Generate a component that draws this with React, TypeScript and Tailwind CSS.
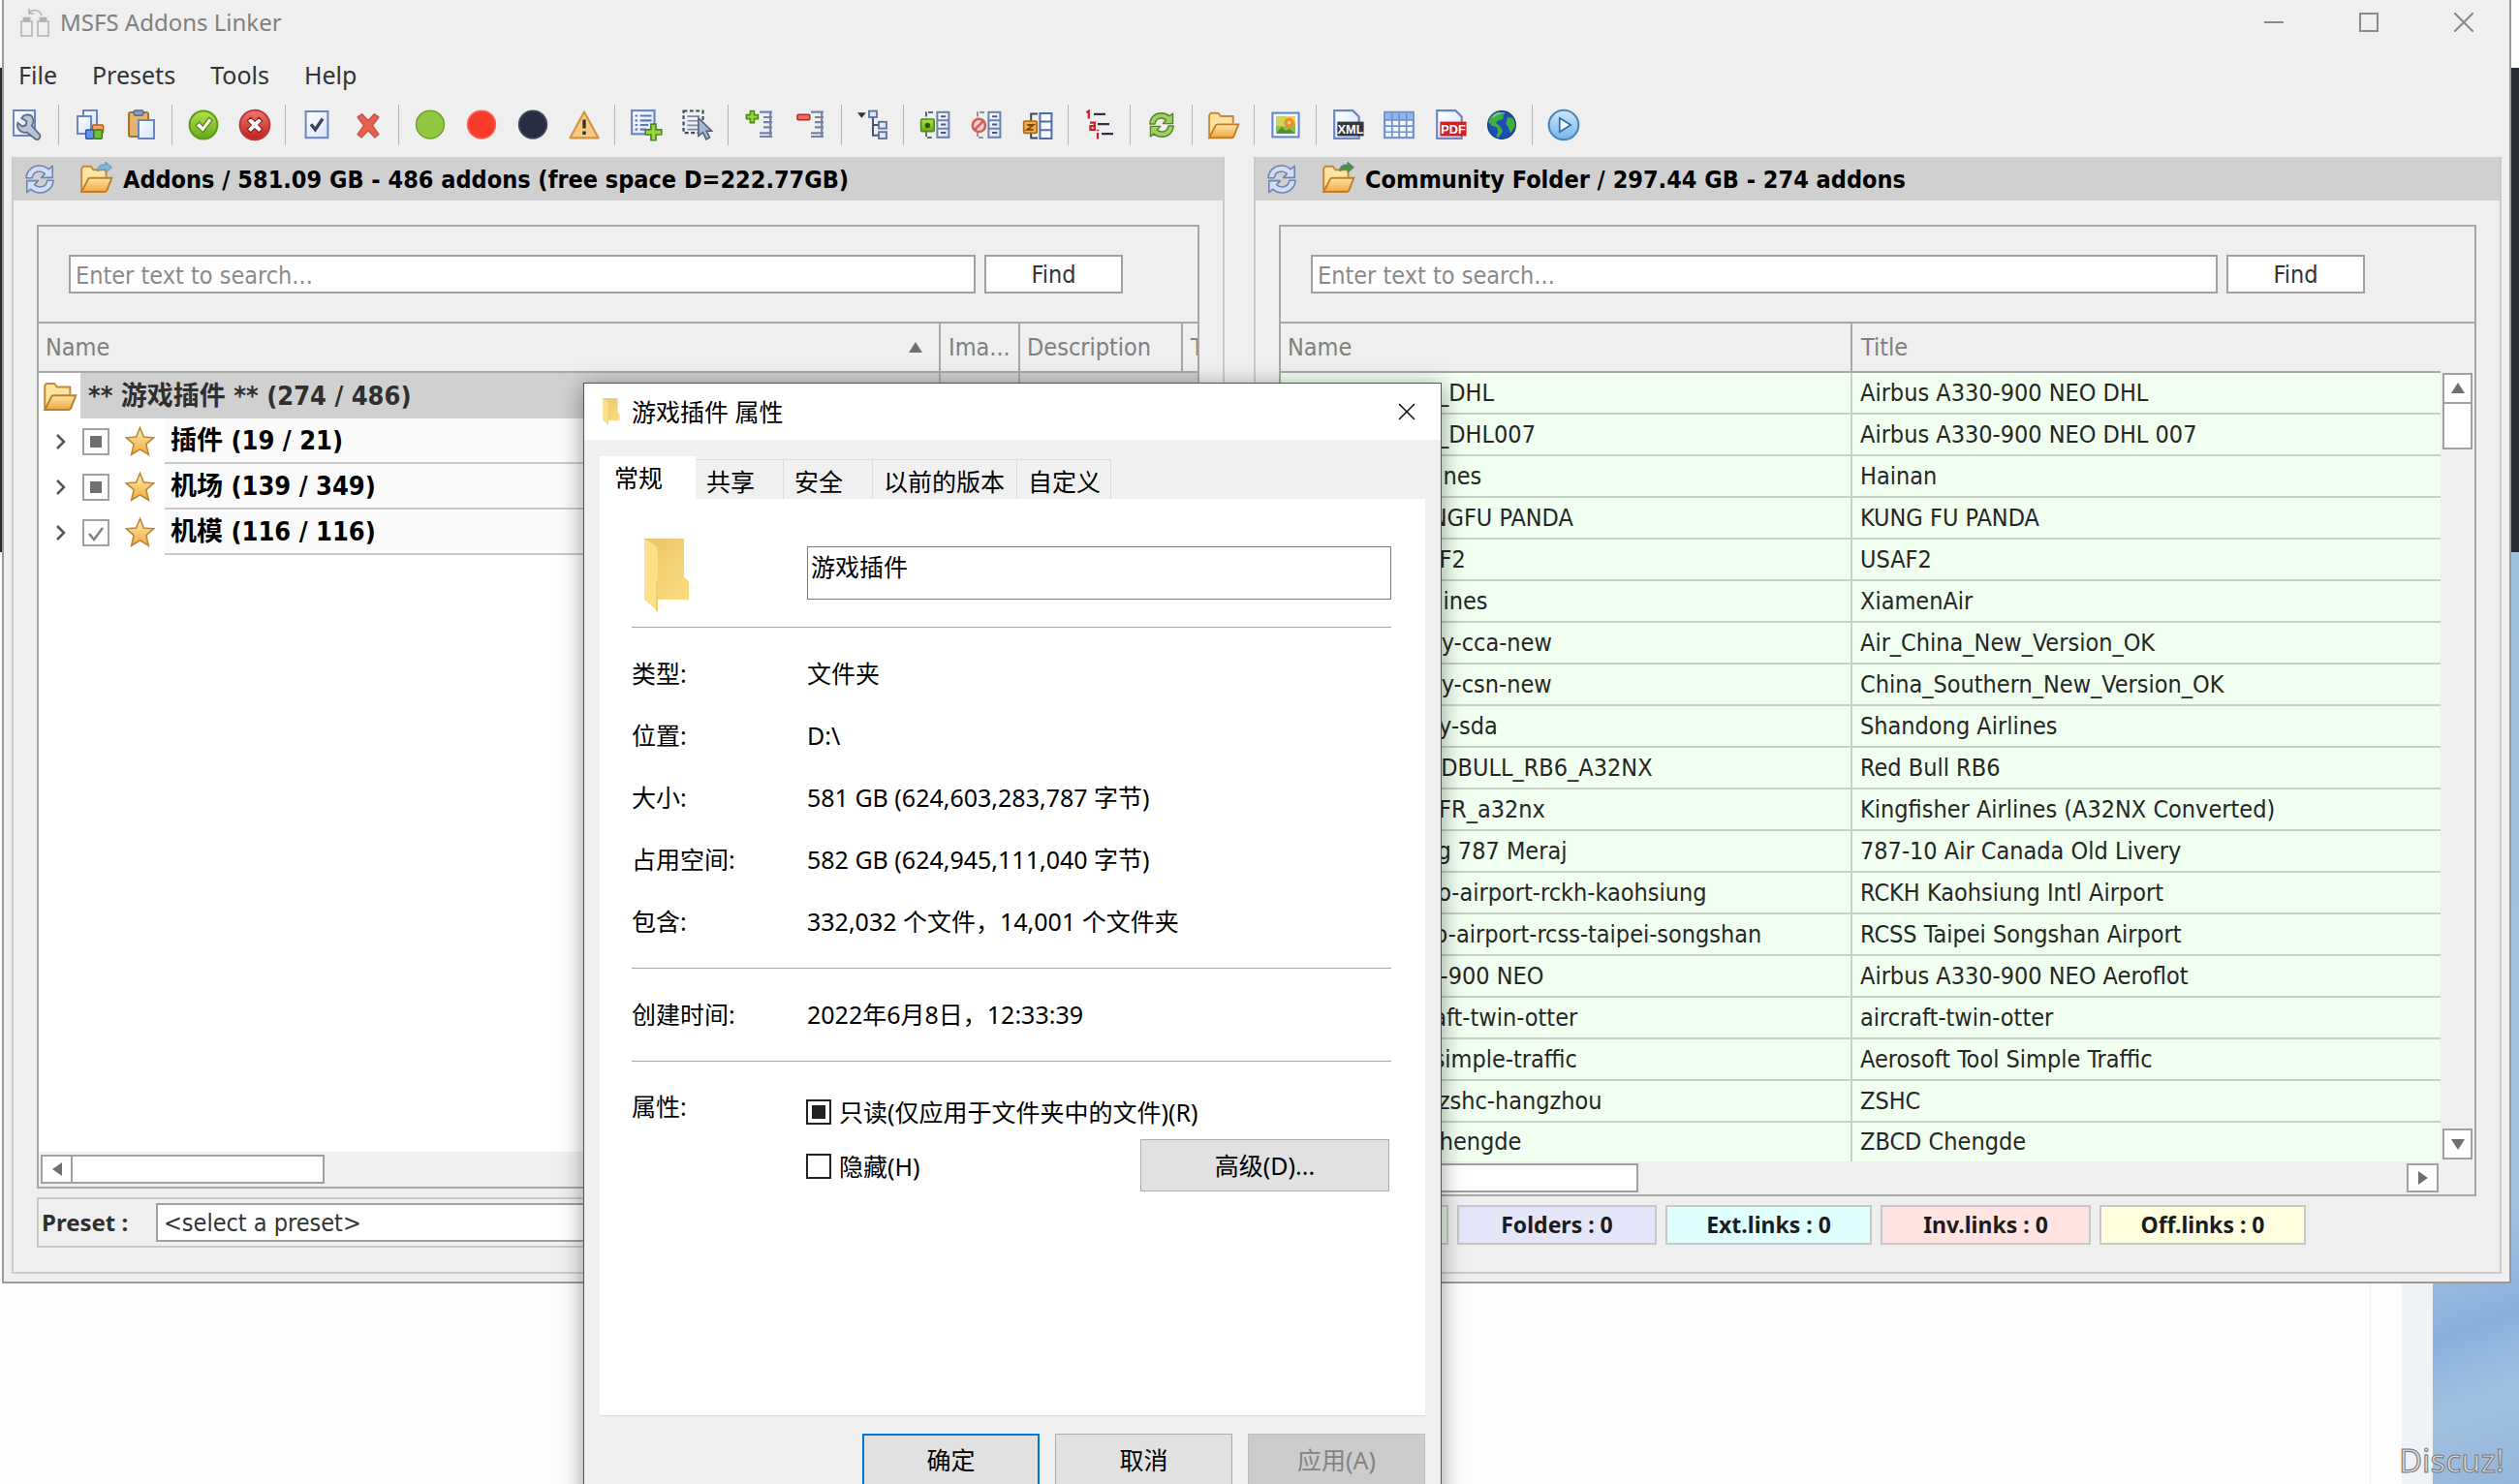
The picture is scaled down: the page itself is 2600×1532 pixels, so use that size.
import React, { useState } from 'react';

const uiFont = "font-['DejaVu_Sans_Condensed','Noto_Sans','Noto_Sans_CJK_SC',sans-serif]";

type Addon = { name: string; title: string };

const communityAddons: Addon[] = [
  { name: 'S__A330_NEO_DHL', title: 'Airbus A330-900 NEO DHL' },
  { name: 'S__A330_NEO_DHL007', title: 'Airbus A330-900 NEO DHL 007' },
  { name: 'A_Hainan_Airlines', title: 'Hainan' },
  { name: 'A_Hainan_KUNGFU PANDA', title: 'KUNG FU PANDA' },
  { name: 'KC_A330_USAF2', title: 'USAF2' },
  { name: 'A_Xiamen_Airlines', title: 'XiamenAir' },
  { name: 'a320neo_livery-cca-new', title: 'Air_China_New_Version_OK' },
  { name: 'a320neo_livery-csn-new', title: 'China_Southern_New_Version_OK' },
  { name: 'a320neo-livery-sda', title: 'Shandong Airlines' },
  { name: 'A_A320NX_REDBULL_RB6_A32NX', title: 'Red Bull RB6' },
  { name: 'A320NX_FX_KFR_a32nx', title: 'Kingfisher Airlines (A32NX Converted)' },
  { name: 'Livery - Boeing 787 Meraj', title: '787-10 Air Canada Old Livery' },
  { name: 'scenery_studio-airport-rckh-kaohsiung', title: 'RCKH Kaohsiung Intl Airport' },
  { name: 'scenery-studio-airport-rcss-taipei-songshan', title: 'RCSS Taipei Songshan Airport' },
  { name: 'Aeroflot_A330-900 NEO', title: 'Airbus A330-900 NEO Aeroflot' },
  { name: 'aerosoft-aircraft-twin-otter', title: 'aircraft-twin-otter' },
  { name: 'aerosoft-tool-simple-traffic', title: 'Aerosoft Tool Simple Traffic' },
  { name: 'china_airport-zshc-hangzhou', title: 'ZSHC' },
  { name: 'airport-zbcd-chengde', title: 'ZBCD Chengde' },
];

type CheckState = 'on' | 'off' | 'mixed';

const addonGroups: { name: string; count: string; state: CheckState }[] = [
  { name: '插件', count: '(19 / 21)', state: 'mixed' },
  { name: '机场', count: '(139 / 349)', state: 'mixed' },
  { name: '机模', count: '(116 / 116)', state: 'on' },
];

/* ---------- icons ---------- */

function Svg({ children, className = 'size-8' }: { children: React.ReactNode; className?: string }) {
  return (
    <svg viewBox="0 0 16 16" className={className} fill="none" aria-hidden="true">
      {children}
    </svg>
  );
}

function IconDefs() {
  return (
    <svg className="absolute size-0" aria-hidden="true">
      <defs>
        <linearGradient id="gPage" x1="0" y1="0" x2="1" y2="1">
          <stop offset="0" stopColor="#ffffff" />
          <stop offset="1" stopColor="#d5e2fa" />
        </linearGradient>
        <linearGradient id="gFolder" x1="0" y1="0" x2="0" y2="1">
          <stop offset="0" stopColor="#ffe6a6" />
          <stop offset="1" stopColor="#f0a540" />
        </linearGradient>
        <linearGradient id="gGreen" x1="0" y1="0" x2="0" y2="1">
          <stop offset="0" stopColor="#b4e04a" />
          <stop offset="1" stopColor="#62a81c" />
        </linearGradient>
        <linearGradient id="gRed" x1="0" y1="0" x2="0" y2="1">
          <stop offset="0" stopColor="#ee7a70" />
          <stop offset="1" stopColor="#c01c1c" />
        </linearGradient>
        <linearGradient id="gStar" x1="0" y1="0" x2="0" y2="1">
          <stop offset="0" stopColor="#fff0b0" />
          <stop offset="1" stopColor="#f2a83c" />
        </linearGradient>
        <linearGradient id="gBlue" x1="0" y1="0" x2="0" y2="1">
          <stop offset="0" stopColor="#cfe8fb" />
          <stop offset="1" stopColor="#74b4e8" />
        </linearGradient>
        <linearGradient id="gWinFolder" x1="0" y1="0" x2="1" y2="1">
          <stop offset="0" stopColor="#e8c468" />
          <stop offset="1" stopColor="#fddc80" />
        </linearGradient>
      </defs>
    </svg>
  );
}

const Page = ({ x = 1.5, y = 0.5, w = 9, h = 12 }) => (
  <rect x={x} y={y} width={w} height={h} fill="url(#gPage)" stroke="#6b84c4" />
);

const WrenchIcon = () => (
  <Svg>
    <Page x={0.5} y={0.5} w={11} h={13} />
    <path d="M9.6 3.2a3.8 3.8 0 0 0-5 1.3l2.6 1.6-.3 2-2 .6-2.2-1.8a3.8 3.8 0 0 0 4.6 4.9l4.6 3.6c1.6.7 3-1.3 1.9-2.6L9.9 8.3a4 4 0 0 0-.3-5.1z" fill="#b9c4d6" stroke="#5d6b86" strokeWidth=".9" />
  </Svg>
);

const CopyIcon = () => (
  <Svg>
    <Page x={4.5} y={0.5} w={7} h={9} />
    <Page x={1.5} y={3.5} w={7} h={9} />
    <rect x="9.2" y="8" width="5.6" height="4" rx=".6" fill="#f7a35c" stroke="#a9601e" strokeWidth=".7" />
    <rect x="5.8" y="10.5" width="4.2" height="4.6" rx=".6" fill="#5b97ea" stroke="#2457a5" strokeWidth=".7" />
    <rect x="10" y="10.5" width="4.2" height="4.6" rx=".6" fill="#6cc23a" stroke="#38791a" strokeWidth=".7" />
  </Svg>
);

const PasteIcon = () => (
  <Svg>
    <rect x="1.5" y="1.5" width="10" height="12.5" rx="1" fill="#e3b469" stroke="#a4742e" />
    <rect x="4" y=".5" width="5" height="2.6" rx=".8" fill="#8d9cc0" stroke="#5b6a94" strokeWidth=".7" />
    <Page x={6.5} y={5.5} w={8} h={9.5} />
  </Svg>
);

const OkIcon = () => (
  <Svg>
    <circle cx="8" cy="8" r="7.2" fill="url(#gGreen)" stroke="#5c9a1b" />
    <path d="M4 8.2l2-1.6 1.6 2 3.2-4.4 1.8 1.3-4.9 6.3z" fill="#fff" stroke="#4e8716" strokeWidth=".6" />
  </Svg>
);

const CancelIcon = () => (
  <Svg className="size-[34px]">
    <circle cx="8" cy="8" r="7.2" fill="url(#gRed)" stroke="#b83a3a" />
    <path d="M4.4 6L6 4.4l2 1.900 2-1.900L11.600 6 9.700 8l1.900 2-1.600 1.600-2-1.900-2 1.900L4.400 10l1.900-2z" fill="#fff" stroke="#8d1515" strokeWidth=".5" />
  </Svg>
);

const CheckPageIcon = () => (
  <Svg>
    <rect x="2.300" y="1" width="11.400" height="13.600" fill="url(#gPage)" stroke="#6b84c4" />
    <path d="M5 7.600l2.200 2.800 3.800-5.600" stroke="#3b4454" strokeWidth="1.700" />
  </Svg>
);

const CrossIcon = () => (
  <Svg>
    <path d="M2.600 4l2.200-1.600L8 5.800l3.200-3.400L13.400 4l-3.200 4.200 3.200 4.600-2 1.600L8 10.800l-3.400 3.600-2-1.600 3.200-4.600z" fill="#e8604f" stroke="#c8554a" strokeWidth=".8" strokeLinejoin="round" />
  </Svg>
);

const Dot = ({ fill, stroke }: { fill: string; stroke: string }) => (
  <Svg>
    <circle cx="8" cy="7.800" r="7.200" fill={fill} stroke={stroke} strokeWidth=".8" />
  </Svg>
);

const WarnIcon = () => (
  <Svg className="size-[34px]">
    <path d="M8 1.600l6.900 12.700H1.100z" fill="#f7c982" stroke="#d09448" strokeLinejoin="round" />
    <path d="M8 5.400v4.200M8 11v1.700" stroke="#3b3320" strokeWidth="1.600" />
  </Svg>
);

const AddTableIcon = () => (
  <Svg className="size-[34px]">
    <rect x="1" y="1" width="11" height="11.400" fill="url(#gPage)" stroke="#6b84c4" />
    <path d="M2.600 3.500h1.200M5 3.500h5.600M2.600 5.800h1.200M5 5.800h5.600M2.600 8h1.200M5 8h4M2.600 10.200h1.200M5 10.200h3" stroke="#5f78b8" />
    <path d="M10.300 7.600h2.400v2.700h2.700v2.400h-2.700v2.700h-2.400v-2.700H7.600v-2.400h2.700z" fill="#9ad53c" stroke="#4b8a18" strokeWidth=".8" />
  </Svg>
);

const SelectIcon = () => (
  <Svg className="size-[34px]">
    <rect x="1.200" y="1.200" width="9.400" height="10.600" stroke="#3d4658" strokeDasharray="1.800 1.200" />
    <path d="M3 3.800h6M3 6h6M3 8.200h6M3 10.200h5" stroke="#7a8aa8" strokeWidth=".8" />
    <path d="M8.400 4.600v8.800l2.200-1.800 1.600 3.400 1.700-.9-1.600-3.200h2.600z" fill="#a9b6cf" stroke="#4d5a73" strokeWidth=".7" />
  </Svg>
);

const Rungs = () => (
  <path d="M8 1.300h6.500M10 4h4.500M10 6.600h4.500M10 9.200h4.500M8 12.200h6.500M13.600 1v13M8 14h6.500" stroke="#7482a8" strokeWidth="1.100" />
);

const ExpandIcon = () => (
  <Svg>
    <Rungs />
    <path d="M3.200.8h2v2h2v2h-2v2h-2v-2h-2v-2h2z" fill="#9ad53c" stroke="#4b8a18" strokeWidth=".8" />
  </Svg>
);

const CollapseIcon = () => (
  <Svg>
    <Rungs />
    <rect x="1" y="2.600" width="6.400" height="2.800" rx=".5" fill="#ee6a60" stroke="#b03030" strokeWidth=".8" />
  </Svg>
);

const TreeIcon = () => (
  <Svg>
    <path d="M0 1.600h4.400L2.200 4.400z" fill="#2f3340" />
    <path d="M8 4v9.400h3M8 8h3" stroke="#4a5470" />
    <rect x="6" y=".8" width="4" height="3.200" fill="#dbe4f8" stroke="#5f6f9c" strokeWidth=".9" />
    <rect x="11" y="6.400" width="4" height="3.400" fill="#dbe4f8" stroke="#5f6f9c" strokeWidth=".9" />
    <rect x="11" y="11.600" width="4" height="3.400" fill="#dbe4f8" stroke="#5f6f9c" strokeWidth=".9" />
  </Svg>
);

const Cabinet = () => (
  <g>
    <rect x="9.200" y="1.400" width="6" height="13" fill="url(#gPage)" stroke="#6d7fae" />
    <path d="M9.200 5.600h6M9.200 9.900h6" stroke="#6d7fae" />
    <path d="M11 3.600h2.600M11 7.800h2.600M11 12h2.600" stroke="#4b5876" />
  </g>
);

const EnableIcon = () => (
  <Svg>
    <path d="M7 1.500H3.500v13H7" stroke="#5d6784" strokeDasharray="2.400 1" />
    <Cabinet />
    <rect x=".8" y="5" width="6.800" height="6.400" rx=".6" fill="url(#gGreen)" stroke="#4b8a18" strokeWidth=".8" />
    <circle cx="4.200" cy="8.200" r="1.300" fill="#23520a" />
  </Svg>
);

const DisableIcon = () => (
  <Svg>
    <path d="M7 1.500H3.500v13H7" stroke="#8d93a5" strokeDasharray="2.400 1" />
    <Cabinet />
    <circle cx="4.200" cy="8.200" r="3.300" fill="#f7d2ce" stroke="#d4605a" strokeWidth="1.300" />
    <path d="M2 10.400l4.400-4.400" stroke="#d4605a" strokeWidth="1.300" />
  </Svg>
);

const LinkIcon = () => (
  <Svg>
    <path d="M8 2.200H4.600v12.600H8" stroke="#3d4658" />
    <rect x="9.200" y="2" width="6" height="13" fill="#f4f8ff" stroke="#4f6bb0" />
    <path d="M9.200 6.200h6M9.200 10.600h6" stroke="#4f6bb0" />
    <rect x=".8" y="6" width="6.800" height="6.200" rx=".6" fill="#f2ad48" stroke="#a8691a" strokeWidth=".8" />
    <path d="M2.600 8h3.200L2.600 10.400h3.200" stroke="#7a4710" strokeWidth=".9" />
  </Svg>
);

const NumberingIcon = () => (
  <Svg>
    <path d="M1.200 1.600l1.200-.8v4M3 6.800h2.400v3.600H3.200V8.600h2M7 12v3.200M7 10.400v.7" stroke="#c8202a" strokeWidth="1.100" />
    <path d="M5 2.400h6M7 7.600h6M9 12.600h6" stroke="#2f3340" strokeWidth="1.100" />
  </Svg>
);

const RefreshIcon = ({ fill, stroke, className }: { fill: string; stroke: string; className?: string }) => (
  <Svg className={className}>
    <g fill={fill} stroke={stroke} strokeWidth=".8" strokeLinejoin="round">
      <path d="M1 7.400C1.200 3.600 4.200 1 7.800 1c1.900 0 3.500.7 4.800 1.800l2-1.600v6H8.800l1.900-2C9.900 4.500 9 4 7.800 4 5.800 4 4.400 5.400 4 7.400z" />
      <path d="M15 8.600C14.800 12.400 11.800 15 8.200 15c-1.900 0-3.500-.7-4.800-1.800l-2 1.600v-6h5.800l-1.900 2c.8.7 1.700 1.200 2.900 1.200 2 0 3.400-1.400 3.800-3.400z" />
    </g>
  </Svg>
);

const FolderIcon = ({ arrow, className = 'size-[34px]' }: { arrow?: string; className?: string }) => (
  <Svg className={className}>
    <path d="M1 13.800V3.200l.8-1h3.600l1.200 1.600h6v3.400" fill="#ffe3a0" stroke="#c48a36" strokeWidth=".9" />
    <path d="M1 14.200L4 8.400c.2-.5.5-.7 1-.7h10.200L13 13.400c-.2.6-.5.8-1 .8z" fill="url(#gFolder)" stroke="#c07e2a" strokeWidth=".9" />
    {arrow && (
      <path d="M8.500 4.500C8.500 2 10 1.200 12.300 1.400V0l3 2.600-3 2.600V3.700c-1.800-.2-2.400.2-3.800.8z" fill={arrow} stroke="#4f7a94" strokeWidth=".3" />
    )}
  </Svg>
);

const PictureIcon = () => (
  <Svg>
    <rect x="1.200" y="1.800" width="13.600" height="12.400" fill="#f4f8ff" stroke="#5f86c8" />
    <rect x="3" y="3.600" width="10" height="8.800" fill="#8fbf4a" />
    <path d="M3 3.600h5v5H3z" fill="#c9d65a" />
    <path d="M8 3.600h5v3.400H8z" fill="#f5cf6a" />
    <circle cx="9.800" cy="6.800" r="2.600" fill="#ee8a2c" />
    <circle cx="9.800" cy="6.800" r="1" fill="#f8d05a" />
    <path d="M3 12.400l3-3.400 2 2 2-1 3 2.400z" fill="#4f8f2a" />
  </Svg>
);

const FileBadgeIcon = ({ label, fill }: { label: string; fill: string }) => (
  <Svg className="size-[34px]">
    <path d="M1.500 1h9l3 3v10.500h-12z" fill="url(#gPage)" stroke="#6b84c4" />
    <rect x="3" y="6.400" width="12.800" height="7" fill={fill} />
    <text x="9.400" y="12.100" textAnchor="middle" fontSize="6" fontWeight="700" fill="#fff" fontFamily="Liberation Sans, sans-serif">
      {label}
    </text>
  </Svg>
);

const TableIcon = () => (
  <Svg className="size-[34px]">
    <rect x="1" y="1.800" width="14" height="12.400" fill="#f4f8ff" stroke="#7391cc" />
    <rect x="1.500" y="2.300" width="13" height="3" fill="#8fb9ec" />
    <path d="M1 5.600h14M1 8.500h14M1 11.400h14M4.600 2v12M8.100 2v12M11.600 2v12" stroke="#7391cc" strokeWidth=".8" />
  </Svg>
);

const GlobeIcon = () => (
  <Svg>
    <circle cx="8" cy="8" r="7.200" fill="#1c4fb4" stroke="#173a75" strokeWidth=".6" />
    <path d="M6.500 1.200C3.500 1.800 1.600 4 1.200 6.500l1.800 2 2.200.5 1 2.500-1 2 .8 1.200c1-.6 1.600-2.400 2.600-3.600L7 8.500 5 7l1.500-1.500 2-.5.500-2zM11 4l2.800.5c.8 1.200 1.200 2.600 1 4.500l-2.300 3.200-1-3-1.300-1.700z" fill="#3fae3a" />
    <path d="M3.500 4C5 2.200 7 1.600 9.500 2" stroke="#a9d3ff" strokeWidth=".8" opacity=".7" />
  </Svg>
);

const PlayIcon = () => (
  <Svg className="size-[34px]">
    <circle cx="8" cy="8" r="7.200" fill="url(#gBlue)" stroke="#4a86bd" />
    <path d="M6 4.600l5.400 3.400L6 11.400z" fill="#f2f9ff" stroke="#2f6ea8" strokeWidth=".8" />
  </Svg>
);

const StarIcon = () => (
  <Svg className="size-[31px]">
    <path d="M8 .8l2 4.900 5.300.4-4 3.500 1.300 5.500L8 12.300 3.400 15.100l1.300-5.500-4-3.500L6 5.700z" fill="url(#gStar)" stroke="#bb8436" strokeWidth=".8" />
  </Svg>
);

const WinFolderIcon = ({ className }: { className: string }) => (
  <svg viewBox="0 0 46 76" className={className} aria-hidden="true">
    <path d="M0 0h41v40l5 4v19H0z" fill="url(#gWinFolder)" />
    <path d="M0 0l10 6c3 2 4 5 4 9v60L0 63z" fill="#fde08a" />
    <path d="M14 42v33l-2 .5V44z" fill="#f3cf70" />
  </svg>
);

const LinkerLogo = () => (
  <svg viewBox="0 0 32 32" className="size-8" fill="none" stroke="#b4b4b4" strokeWidth="1.600" aria-hidden="true">
    <path d="M2 15h11v15H2zM19 15h11v15H19z" />
    <path d="M4.500 11.500h6V15h-6zM21.500 11.500h6V15h-6z" fill="#b4b4b4" />
    <path d="M23 9C21 3 14 2 10 6M10 2v5h5" />
  </svg>
);

const toolbarGroups: { label: string; icon: React.ReactNode }[][] = [
  [{ label: 'Options', icon: <WrenchIcon /> }],
  [
    { label: 'Copy', icon: <CopyIcon /> },
    { label: 'Paste', icon: <PasteIcon /> },
  ],
  [
    { label: 'Enable', icon: <OkIcon /> },
    { label: 'Disable', icon: <CancelIcon /> },
  ],
  [
    { label: 'Check', icon: <CheckPageIcon /> },
    { label: 'Uncheck', icon: <CrossIcon /> },
  ],
  [
    { label: 'Green', icon: <Dot fill="#90c83f" stroke="#6fa52c" /> },
    { label: 'Red', icon: <Dot fill="#fb3b2a" stroke="#ee6a5c" /> },
    { label: 'Dark', icon: <Dot fill="#282d42" stroke="#454a5e" /> },
    { label: 'Warnings', icon: <WarnIcon /> },
  ],
  [
    { label: 'Add', icon: <AddTableIcon /> },
    { label: 'Select', icon: <SelectIcon /> },
  ],
  [
    { label: 'Expand', icon: <ExpandIcon /> },
    { label: 'Collapse', icon: <CollapseIcon /> },
  ],
  [{ label: 'Tree', icon: <TreeIcon /> }],
  [
    { label: 'Enable group', icon: <EnableIcon /> },
    { label: 'Disable group', icon: <DisableIcon /> },
    { label: 'Link group', icon: <LinkIcon /> },
  ],
  [{ label: 'Numbering', icon: <NumberingIcon /> }],
  [{ label: 'Refresh', icon: <RefreshIcon fill="#a3cf62" stroke="#54852a" className="size-7" /> }],
  [{ label: 'Open folder', icon: <FolderIcon /> }],
  [{ label: 'Images', icon: <PictureIcon /> }],
  [
    { label: 'Export XML', icon: <FileBadgeIcon label="XML" fill="#33373f" /> },
    { label: 'Export table', icon: <TableIcon /> },
    { label: 'Export PDF', icon: <FileBadgeIcon label="PDF" fill="#cf2027" /> },
    { label: 'Web', icon: <GlobeIcon /> },
  ],
  [{ label: 'Run', icon: <PlayIcon /> }],
];

/* ---------- shared parts ---------- */

function Triangle({ dir }: { dir: 'up' | 'down' | 'left' | 'right' }) {
  const points = {
    up: '9,3 16,14 2,14',
    down: '2,4 16,4 9,15',
    left: '4,9 14,2 14,16',
    right: '14,9 4,2 4,16',
  };
  return (
    <svg viewBox="0 0 18 18" className="size-[18px]" aria-hidden="true">
      <polygon points={points[dir]} fill="#6f6f6f" />
    </svg>
  );
}

function ScrollButton({ dir, label, className }: { dir: 'up' | 'down' | 'left' | 'right'; label: string; className: string }) {
  return (
    <button aria-label={label} className={`flex shrink-0 items-center justify-center border-2 border-[#a0a0a0] bg-white ${className}`}>
      <Triangle dir={dir} />
    </button>
  );
}

function SearchBar({ id }: { id: string }) {
  const [text, setText] = useState('');
  return (
    <form className="flex h-[98px] items-center gap-[9px] pl-[31px]" onSubmit={(e) => e.preventDefault()}>
      <input
        id={id}
        type="text"
        aria-label="Search"
        placeholder="Enter text to search..."
        value={text}
        onChange={(e) => setText(e.target.value)}
        className="h-10 w-[936px] border-2 border-[#a0a0a0] bg-white px-[5px] pt-[2px] placeholder-[#8a8a8a] outline-none"
      />
      <button type="submit" className="h-10 w-[143px] border-2 border-[#a0a0a0] bg-white pt-[2px] text-[#333]">
        Find
      </button>
    </form>
  );
}

function PanelHeader({ title, arrow }: { title: string; arrow: string }) {
  return (
    <div className="flex h-[45px] items-center bg-[#d0d0d0] pl-[11px]">
      <button aria-label="Reload">
        <RefreshIcon fill="#d3def5" stroke="#6f83b5" className="size-[32px]" />
      </button>
      <button aria-label="Browse" className="ml-[25px]">
        <FolderIcon arrow={arrow} className="size-[35px]" />
      </button>
      <h2 className="ml-[10px] pt-[2px] font-bold text-black">{title}</h2>
    </div>
  );
}

function CheckBox({ id, state, label, dark }: { id: string; state: CheckState; label?: string; dark?: boolean }) {
  const [value, setValue] = useState<CheckState>(state);
  const border = dark ? 'size-[26px] border-[#222]' : 'size-7 border-[#a0a0a0]';
  return (
    <span className="relative flex shrink-0">
      <input
        id={id}
        type="checkbox"
        aria-label={label}
        checked={value !== 'off'}
        onChange={() => setValue(value === 'off' ? 'on' : 'off')}
        className={`appearance-none border-2 bg-white ${border}`}
      />
      {value === 'mixed' && (
        <span className={`pointer-events-none absolute ${dark ? 'inset-[6px] bg-[#222]' : 'inset-2 bg-[#6f6f6f]'}`} />
      )}
      {value === 'on' && (
        <svg viewBox="0 0 28 28" className="pointer-events-none absolute inset-0" fill="none" aria-hidden="true">
          <path d="M7 15l5 6 9-12" stroke="#808080" strokeWidth="2.500" />
        </svg>
      )}
    </span>
  );
}

/* ---------- left panel ---------- */

function AddonsPanel() {
  return (
    <section className="flex flex-col border-2 border-t-0 border-[#cbcbcb]">
      <PanelHeader title="Addons / 581.09 GB - 486 addons (free space D=222.77GB)" arrow="#7fb6d8" />

      <div className="flex grow flex-col px-6 pt-[25px] pb-[25px]">
        <div className="flex grow flex-col border-2 border-[#a8a8a8]">
          <SearchBar id="search-addons" />
          <div className="grow overflow-hidden bg-white">
            <table className="w-full table-fixed border-collapse text-left">
              <thead>
                <tr className="h-[51px] border-y-2 border-[#a8a8a8] bg-[#efefef] text-[#808080]">
                  <th className="w-[930px] border-r-2 border-[#a8a8a8] px-[7px] font-normal">
                    <span className="flex items-center justify-between">
                      Name <span className="pr-2"><Triangle dir="up" /></span>
                    </span>
                  </th>
                  <th className="w-[82px] border-r-2 border-[#a8a8a8] px-2 font-normal">Ima...</th>
                  <th className="w-[168px] border-r-2 border-[#a8a8a8] px-[7px] font-normal">Description</th>
                  <th className="overflow-hidden px-2 font-normal">T</th>
                </tr>
              </thead>
              <tbody className="text-[27px] font-bold text-black">
                <tr className="h-[47px]">
                  <td className="border-r-2 border-[#a8a8a8] p-0">
                    <div className="flex h-[47px] items-center">
                      <span className="flex w-[43px] shrink-0 justify-center">
                        <FolderIcon className="size-9" />
                      </span>
                      <span className="flex h-full grow items-center bg-[#d0d0d0] pl-2 text-[#2f2f2f]">
                        ** 游戏插件 ** (274 / 486)
                      </span>
                    </div>
                  </td>
                  <td className="border-r-2 border-[#a8a8a8] bg-[#d0d0d0]" />
                  <td className="bg-[#d0d0d0]" />
                  <td className="bg-[#d0d0d0]" />
                </tr>
                {addonGroups.map((group, i) => (
                  <tr key={group.name} className="h-[47px]">
                    <td colSpan={4} className="p-0">
                      <div className="flex h-[47px] items-center">
                        <button aria-label={`Expand ${group.name}`} className="flex w-[45px] shrink-0 justify-center">
                          <svg viewBox="0 0 12 18" className="h-[18px] w-3" fill="none" aria-hidden="true">
                            <path d="M2 2l7 7-7 7" stroke="#555" strokeWidth="2.500" />
                          </svg>
                        </button>
                        <CheckBox id={`group-${i}`} state={group.state} label={group.name} />
                        <span className="flex w-[57px] shrink-0 justify-center pl-[6px]">
                          <StarIcon />
                        </span>
                        <span className="flex h-full grow items-center border-b-2 border-[#c8c8c8] bg-[#fafafa] pl-[6px]">
                          {group.name} {group.count}
                        </span>
                      </div>
                    </td>
                  </tr>
                ))}
              </tbody>
            </table>
          </div>
          <div className="flex h-9 items-center bg-[#efefef] pl-[2px]">
            <ScrollButton dir="left" label="Scroll left" className="h-[30px] w-[33px]" />
            <div className="h-[30px] w-[260px] border-2 border-l-0 border-[#a0a0a0] bg-white" />
          </div>
        </div>

        <div className="mt-[9px] flex h-[52px] items-center border-2 border-[#c8c8c8]">
          <label htmlFor="preset" className="w-[121px] pl-[3px] font-['Noto_Sans',sans-serif] text-[24px] font-bold text-[#2f2f2f]">
            Preset :
          </label>
          <select id="preset" className="h-10 grow appearance-none border-2 border-[#a0a0a0] bg-white pt-[2px] pl-[6px] text-[#333]">
            <option>&lt;select a preset&gt;</option>
          </select>
        </div>
      </div>
    </section>
  );
}

/* ---------- right panel ---------- */

function CommunityPanel() {
  return (
    <section className="flex flex-col border-2 border-t-0 border-[#cbcbcb]">
      <PanelHeader title="Community Folder / 297.44 GB - 274 addons" arrow="#4f9140" />

      <div className="px-6 pt-[25px] pb-[28px]">
        <div className="border-2 border-[#a8a8a8]">
          <SearchBar id="search-community" />
          <div className="relative">
            <table className="w-full table-fixed border-collapse text-left">
              <thead>
                <tr className="h-[51px] border-y-2 border-[#a8a8a8] text-[#808080]">
                  <th className="w-[589px] border-r-2 border-[#a8a8a8] px-[7px] font-normal">Name</th>
                  <th className="px-[9px] font-normal">Title</th>
                </tr>
              </thead>
              <tbody className="bg-[#f0fff0] text-[#262626]">
                {communityAddons.map((addon) => (
                  <tr key={addon.name} className="h-[43px] border-b-2 border-[#c6d0c6] last:h-[41px] last:border-b-0">
                    <td className="border-r-2 border-[#c6d0c6] py-0 pl-[7px] leading-8 whitespace-nowrap">{addon.name}</td>
                    <td className="py-0 pl-2 leading-8 whitespace-nowrap">{addon.title}</td>
                  </tr>
                ))}
              </tbody>
            </table>
            <div className="absolute top-[51px] right-0 bottom-0 flex w-[35px] flex-col items-center bg-[#efefef] py-[2px]">
              <ScrollButton dir="up" label="Scroll up" className="h-8 w-[31px]" />
              <div className="h-[47px] w-[31px] border-2 border-t-0 border-[#a0a0a0] bg-white" />
              <ScrollButton dir="down" label="Scroll down" className="mt-auto h-8 w-[31px]" />
            </div>
          </div>
          <div className="flex h-[34px] items-center pr-[37px] pl-[2px]">
            <ScrollButton dir="left" label="Scroll left" className="h-[30px] w-[33px]" />
            <div className="h-[30px] w-[334px] border-2 border-l-0 border-[#a0a0a0] bg-white" />
            <ScrollButton dir="right" label="Scroll right" className="ml-auto h-[30px] w-[33px]" />
          </div>
        </div>

        <div className="mt-[9px] flex h-[41px] gap-[9px] font-['Noto_Sans',sans-serif] text-[23px] font-bold text-[#1c1c1c]">
          <span className="flex w-[175px] items-center justify-center border-2 border-[#c8c8c8] bg-[#e8fbe8] pb-[2px]">Links : 274</span>
          <span className="flex w-[206px] items-center justify-center border-2 border-[#c8c8c8] bg-[#e6e6fa] pb-[2px]">Folders : 0</span>
          <span className="flex w-[213px] items-center justify-center border-2 border-[#c8c8c8] bg-[#e0ffff] pb-[2px]">Ext.links : 0</span>
          <span className="flex w-[217px] items-center justify-center border-2 border-[#c8c8c8] bg-[#ffe4e1] pb-[2px]">Inv.links : 0</span>
          <span className="flex w-[213px] items-center justify-center border-2 border-[#c8c8c8] bg-[#ffffe0] pb-[2px]">Off.links : 0</span>
        </div>
      </div>
    </section>
  );
}

/* ---------- properties dialog ---------- */

const tabs = [
  { name: '共享', width: 'w-[91px]' },
  { name: '安全', width: 'w-[92px]' },
  { name: '以前的版本', width: 'w-[149px]' },
  { name: '自定义', width: 'w-[97px]' },
];

const details = [
  { label: '类型:', value: '文件夹' },
  { label: '位置:', value: 'D:\\' },
  { label: '大小:', value: '581 GB (624,603,283,787 字节)' },
  { label: '占用空间:', value: '582 GB (624,945,111,040 字节)' },
  { label: '包含:', value: '332,032 个文件，14,001 个文件夹' },
];

function DetailRow({ label, value }: { label: string; value: string }) {
  return (
    <div className="grid h-16 grid-cols-[181px_1fr] items-center">
      <dt>{label}</dt>
      <dd>{value}</dd>
    </div>
  );
}

function PropertiesDialog() {
  const [name, setName] = useState('游戏插件');
  return (
    <div
      role="dialog"
      aria-label="游戏插件 属性"
      className="absolute top-[395px] left-[602px] w-[886px] border border-[#555] bg-[#f0f0f0] font-['Noto_Sans','Noto_Sans_CJK_SC',sans-serif] text-[25px] leading-8 text-black shadow-[0_4px_22px_rgba(0,0,0,0.4)]"
    >
      <div className="flex h-[58px] items-center bg-white pr-[26px] pl-[19px]">
        <WinFolderIcon className="h-7 w-[18px]" />
        <span className="ml-3 grow">游戏插件 属性</span>
        <button aria-label="Close">
          <svg viewBox="0 0 18 18" className="size-[18px]" stroke="#111" strokeWidth="1.600" aria-hidden="true">
            <path d="M1 1l16 16M17 1L1 17" />
          </svg>
        </button>
      </div>

      <div className="px-4 pt-[17px]">
        <div role="tablist" className="flex items-end">
          <button role="tab" aria-selected="true" className="h-11 w-[99px] bg-white pl-[15px] text-left">
            常规
          </button>
          {tabs.map((tab) => (
            <button
              key={tab.name}
              role="tab"
              aria-selected="false"
              className={`flex h-[41px] items-center justify-start border border-b-0 border-l-0 border-[#dcdcdc] pt-1 pl-[11px] whitespace-nowrap ${tab.width}`}
            >
              {tab.name}
            </button>
          ))}
        </div>

        <div className="border-b border-[#dcdcdc] bg-white pt-[49px] pr-[35px] pb-[229px] pl-[33px]">
          <div className="flex h-[55px] items-center">
            <div className="w-[181px] pt-1 pl-[13px]">
              <WinFolderIcon className="h-[76px] w-[46px]" />
            </div>
            <input
              aria-label="名称"
              value={name}
              onChange={(e) => setName(e.target.value)}
              className="h-[55px] grow border border-[#7a7a7a] bg-white pb-4 pl-[3px] outline-none"
            />
          </div>

          <hr className="mt-7 border-[#a8a8a8]" />
          <dl className="pt-[15px] pb-4">
            {details.map((d) => (
              <DetailRow key={d.label} label={d.label} value={d.value} />
            ))}
          </dl>
          <hr className="border-[#a8a8a8]" />
          <dl className="pt-[15px] pb-4">
            <DetailRow label="创建时间:" value="2022年6月8日，12:33:39" />
          </dl>
          <hr className="border-[#a8a8a8]" />

          <div className="mt-6 grid grid-cols-[180px_1fr]">
            <span className="pt-[6px]">属性:</span>
            <div>
              <div className="flex h-14 items-center gap-2">
                <CheckBox id="readonly" state="mixed" dark />
                <label htmlFor="readonly">只读(仅应用于文件夹中的文件)(R)</label>
              </div>
              <div className="flex h-14 items-center gap-2">
                <CheckBox id="hidden" state="off" dark />
                <label htmlFor="hidden">隐藏(H)</label>
                <button className="mr-[2px] mb-[2px] ml-auto h-[54px] w-[257px] border border-[#adadad] bg-[#e1e1e1]">高级(D)...</button>
              </div>
            </div>
          </div>
        </div>

        <div className="flex justify-end gap-4 pt-[18px] pb-4">
          <button className="h-14 w-[183px] border-2 border-[#0078d7] bg-[#e1e1e1] pb-[2px]">确定</button>
          <button className="h-14 w-[183px] border border-[#adadad] bg-[#e1e1e1] pb-[2px]">取消</button>
          <button disabled className="h-14 w-[183px] border border-[#bfbfbf] bg-[#cccccc] pb-[2px] text-[#838383]">
            应用(A)
          </button>
        </div>
      </div>
    </div>
  );
}

/* ---------- desktop ---------- */

export default function App() {
  return (
    <div className={`relative h-screen overflow-hidden bg-[#fdfdfd] text-[25px] leading-8 ${uiFont}`}>
      <IconDefs />

      {/* what lies behind the windows */}
      <div className="absolute inset-x-0 top-[70px] h-[500px] bg-[#2a2c33]" />
      <div className="absolute top-[570px] right-0 bottom-0 flex w-[154px] border-l border-[#efefef]">
        <div className="ml-8 w-8 bg-[#eef3f7]" />
        <div className="grow bg-[linear-gradient(160deg,#9cc0e0_0%,#a3c3e2_70%,#8ab0dc_82%,#a2c1e0_90%,#93b6da_100%)]" />
      </div>

      <main className="relative mr-2 ml-[2px] border-2 border-t-0 border-[#9a9a9a] bg-[#efefef] pb-2">
        <header className="font-['Noto_Sans',sans-serif]">
          <div className="flex h-[46px] items-center pl-4">
            <LinkerLogo />
            <h1 className="ml-[10px] grow text-[24px] text-[#808080]">MSFS Addons Linker</h1>
            <div className="flex items-center gap-[78px] pr-[37px]">
              <button aria-label="Minimize">
                <svg viewBox="0 0 20 20" className="size-5" stroke="#8a8a8a" strokeWidth="2" aria-hidden="true">
                  <path d="M0 10h20" />
                </svg>
              </button>
              <button aria-label="Maximize">
                <svg viewBox="0 0 20 20" className="size-5" stroke="#8a8a8a" strokeWidth="2" fill="none" aria-hidden="true">
                  <path d="M1 1h18v18H1z" />
                </svg>
              </button>
              <button aria-label="Close">
                <svg viewBox="0 0 20 20" className="size-5" stroke="#8a8a8a" strokeWidth="2" aria-hidden="true">
                  <path d="M0 0l20 20M20 0L0 20" />
                </svg>
              </button>
            </div>
          </div>
          <nav className="flex h-[62px] items-center gap-9 pl-[15px] text-[#333]">
            <button>File</button>
            <button>Presets</button>
            <button>Tools</button>
            <button>Help</button>
          </nav>
        </header>

        <div className="-ml-[2px] flex h-[42px] items-center">
          {toolbarGroups.map((group, i) => (
            <div key={i} className="flex h-full items-center">
              {i > 0 && <span className="mx-[5px] h-full w-px bg-[#b4b4b4]" />}
              {group.map((tool) => (
                <button key={tool.label} aria-label={tool.label} className="flex w-[53px] justify-center">
                  {tool.icon}
                </button>
              ))}
            </div>
          ))}
        </div>

        <div className="mt-3 grid grid-cols-[1252px_1fr] gap-[30px] px-2">
          <AddonsPanel />
          <CommunityPanel />
        </div>
      </main>

      <PropertiesDialog />

      <span className="absolute right-[15px] bottom-1 font-['Noto_Sans',sans-serif] text-[33px] leading-10 text-[#d8d8d8] [-webkit-text-stroke:1px_#777]">
        Discuz!
      </span>
    </div>
  );
}
